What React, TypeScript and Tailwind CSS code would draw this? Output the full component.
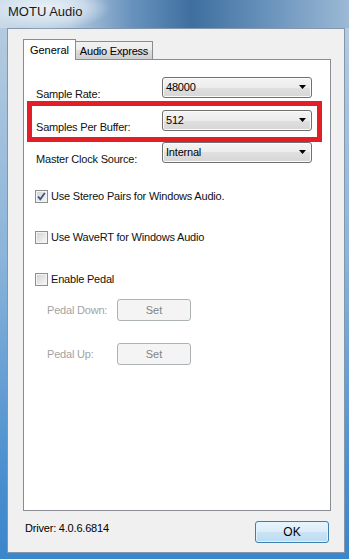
import type { ReactNode } from "react";

const SANS = "font-['Liberation_Sans',Arial,sans-serif]";

function Dropdown({ value }: { value: string }) {
  return (
    <div className="flex h-[21px] w-[150px] items-center justify-between rounded-[3px] border border-[#707070] bg-[linear-gradient(#f4f4f4,#ececec_50%,#e0e0e0_50%,#d6d6d6)] pl-[3px] pr-[4px] shadow-[inset_0_0_0_1px_#fbfbfb]">
      <span className="text-[11px] leading-none tracking-[-0.2px] text-black">{value}</span>
      <svg width="8" height="5" viewBox="0 0 8 5">
        <polygon points="0,0 7,0 3.5,4" fill="#000" />
      </svg>
    </div>
  );
}

function SettingRow({ label, value, inset }: { label: string; value: string; inset?: boolean }) {
  return (
    <div className={`flex h-[21px] items-end ${inset ? "pl-[4px]" : "pl-[12px]"}`}>
      <span className="w-[126px] translate-y-[2px] text-[11px] leading-none tracking-[-0.2px] text-[#111]">
        {label}
      </span>
      <Dropdown value={value} />
    </div>
  );
}

function Checkbox({ checked, label }: { checked?: boolean; label: string }) {
  return (
    <div className="flex h-[13px] items-center gap-[3px] pl-[11px]">
      <div className="flex h-[13px] w-[13px] items-center justify-center border border-[#8e8f8f] bg-[#f4f4f4] p-px">
        <div className="relative h-full w-full bg-[linear-gradient(135deg,#d4d4d4,#f6f6f6)]">
          {checked && (
            <svg className="absolute -left-px -top-px" width="11" height="11" viewBox="0 0 11 11">
              <path d="M2 5.5 L4.3 8.2 L8.8 2" fill="none" stroke="#3e5382" strokeWidth="1.8" />
            </svg>
          )}
        </div>
      </div>
      <span className="text-[11px] leading-none tracking-[-0.2px] text-[#111]">{label}</span>
    </div>
  );
}

function PedalRow({ label }: { label: string }) {
  return (
    <div className="flex h-[22px] items-center pl-[23px]">
      <span className="w-[70px] text-[11px] leading-none tracking-[-0.2px] text-[#a3a3a3]">{label}</span>
      <div className="flex h-[22px] w-[74px] items-center justify-center rounded-[3px] border border-[#adb2b5] bg-[#f4f4f4] text-[11px] leading-none text-[#838383]">
        Set
      </div>
    </div>
  );
}

function Tab({ children, active }: { children: ReactNode; active?: boolean }) {
  return active ? (
    <div className="relative z-10 -mb-px flex h-[21px] w-[53px] items-center justify-center border border-b-0 border-[#898c95] bg-white text-[11px] leading-none text-black">
      {children}
    </div>
  ) : (
    <div className="flex h-[18px] w-[77px] items-center justify-center border border-b-0 border-l-0 border-[#898c95] bg-[linear-gradient(#f2f2f2,#ebebeb_50%,#dddddd_50%,#cfcfcf)] pt-[1px] text-[11px] leading-none tracking-[-0.2px] text-black">
      {children}
    </div>
  );
}

export default function App() {
  return (
    <div
      className={`${SANS} flex h-[559px] w-[349px] flex-col overflow-hidden bg-[linear-gradient(#b9cde0,#8cb5da_45%,#4a8fcf_85%,#3a86cb)]`}
    >
      {/* Title bar */}
      <div className="relative h-[28px] bg-[linear-gradient(90deg,#c8d8e7_0%,#b5cadf_20%,#6792bd_38%,#3f6f9f_55%,#6590ba_75%,#9cb9d5_100%)]">
        <div className="absolute left-[-20px] top-[-14px] h-[44px] w-[130px] rounded-full bg-[radial-gradient(closest-side,rgba(235,242,248,0.95),rgba(220,232,243,0.7)_60%,rgba(220,232,243,0))]" />
        <span className="relative block pl-[8px] pt-[5px] text-[13px] leading-none text-[#1b1b1b]">MOTU Audio</span>
      </div>

      {/* Client area */}
      <div className="ml-[7px] h-[525px] w-[338px] border border-[#8396ab] bg-[#f0f0f0] pl-[15px] pt-[10px]">
        {/* Tabs */}
        <div className="flex h-[20px] items-end">
          <Tab active>General</Tab>
          <Tab>Audio Express</Tab>
        </div>

        {/* Panel */}
        <div className="h-[452px] w-[308px] border border-[#898c95] bg-white pt-[17px]">
          <SettingRow label="Sample Rate:" value="48000" />
          <div className="ml-[3px] mt-[3px] h-[41px] w-[295px] border-[5px] border-[#e41e26] pt-[4px]">
            <SettingRow inset label="Samples Per Buffer:" value="512" />
          </div>
          <SettingRow label="Master Clock Source:" value="Internal" />

          <div className="mt-[27px]">
            <Checkbox checked label="Use Stereo Pairs for Windows Audio." />
          </div>
          <div className="mt-[28px]">
            <Checkbox label="Use WaveRT for Windows Audio" />
          </div>
          <div className="mt-[29px]">
            <Checkbox label="Enable Pedal" />
          </div>

          <div className="mt-[13px]">
            <PedalRow label="Pedal Down:" />
          </div>
          <div className="mt-[22px]">
            <PedalRow label="Pedal Up:" />
          </div>
        </div>

        {/* Footer */}
        <div className="flex w-[308px] items-start justify-between pt-[10px]">
          <span className="ml-[2px] mt-[2px] text-[11px] leading-none tracking-[-0.2px] text-black">Driver: 4.0.6.6814</span>
          <div className="mr-[2px] flex h-[22px] w-[74px] items-center justify-center rounded-[3px] border border-[#3c7fb1] bg-[linear-gradient(#eaf4fb,#dcecf8_50%,#c9e3f5_50%,#bcdcf2)] text-[12px] leading-none text-black shadow-[inset_0_0_0_1px_#dff2fd]">
            OK
          </div>
        </div>
      </div>
    </div>
  );
}
